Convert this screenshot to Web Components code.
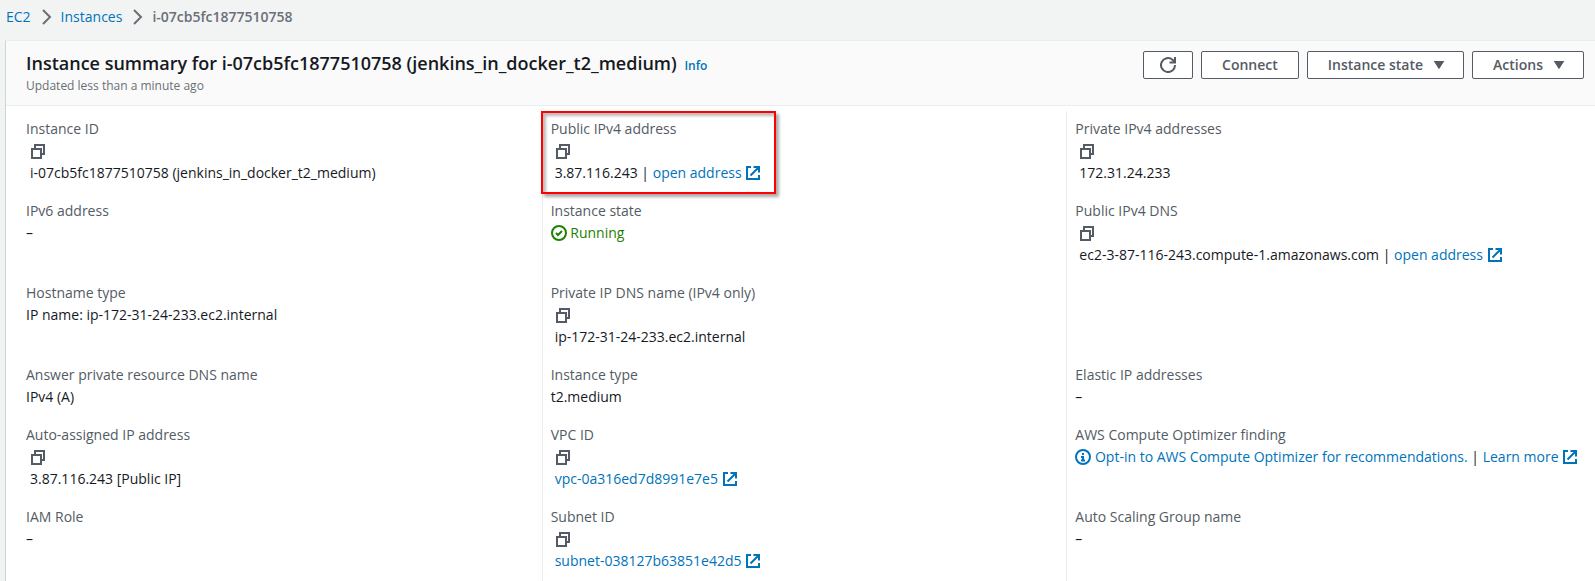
<!DOCTYPE html>
<html lang="en">
<head>
<meta charset="utf-8">
<title>Instance summary</title>
<style>
  html, body { margin: 0; height: 100%; }
  body {
    --link: #0073bb; --ink: #16191f; --muted: #545b64; --line: #eaeded;
    background: #f2f3f3; color: var(--ink);
    font: 14px/22px "Open Sans", "Noto Sans", sans-serif;
  }
</style>
</head>
<body>
<ec2-page>
  <ec2-breadcrumbs slot="top">
    <ec2-crumb>EC2</ec2-crumb>
    <ec2-crumb>Instances</ec2-crumb>
    <ec2-crumb current>i-07cb5fc1877510758</ec2-crumb>
  </ec2-breadcrumbs>
  <ec2-panel>
    <span slot="title">Instance summary for i-07cb5fc1877510758 (jenkins_in_docker_t2_medium)</span>
    <span slot="subtitle">Updated less than a minute ago</span>
    <ec2-button slot="actions" label="Refresh"><ec2-icon name="refresh"></ec2-icon></ec2-button>
    <ec2-button slot="actions">Connect</ec2-button>
    <ec2-button slot="actions" menu>Instance state</ec2-button>
    <ec2-button slot="actions" menu>Actions</ec2-button>

    <ec2-field label="Instance ID" copy>i-07cb5fc1877510758 (jenkins_in_docker_t2_medium)</ec2-field>
    <ec2-field label="Public IPv4 address" copy marked>3.87.116.243 | <ec2-link external>open address</ec2-link></ec2-field>
    <ec2-field label="Private IPv4 addresses" copy>172.31.24.233</ec2-field>

    <ec2-field label="IPv6 address">–</ec2-field>
    <ec2-field label="Instance state"><ec2-status>Running</ec2-status></ec2-field>
    <ec2-field label="Public IPv4 DNS" copy>ec2-3-87-116-243.compute-1.amazonaws.com | <ec2-link external>open address</ec2-link></ec2-field>

    <ec2-field label="Hostname type">IP name: ip-172-31-24-233.ec2.internal</ec2-field>
    <ec2-field label="Private IP DNS name (IPv4 only)" copy>ip-172-31-24-233.ec2.internal</ec2-field>
    <ec2-field></ec2-field>

    <ec2-field label="Answer private resource DNS name">IPv4 (A)</ec2-field>
    <ec2-field label="Instance type">t2.medium</ec2-field>
    <ec2-field label="Elastic IP addresses">–</ec2-field>

    <ec2-field label="Auto-assigned IP address" copy>3.87.116.243 [Public IP]</ec2-field>
    <ec2-field label="VPC ID" copy><ec2-link external>vpc-0a316ed7d8991e7e5</ec2-link></ec2-field>
    <ec2-field label="AWS Compute Optimizer finding"><ec2-link info>Opt-in to AWS Compute Optimizer for recommendations.</ec2-link> | <ec2-link external>Learn more</ec2-link></ec2-field>

    <ec2-field label="IAM Role">–</ec2-field>
    <ec2-field label="Subnet ID" copy><ec2-link external>subnet-038127b63851e42d5</ec2-link></ec2-field>
    <ec2-field label="Auto Scaling Group name">–</ec2-field>
  </ec2-panel>
</ec2-page>
<script>
const ICONS = {
  copy: '<path d="M2 6h9v9H2zM5 6V2h9v9h-3"/>',
  external: '<path d="M6 2H2v12h12v-4M8.5 2H14v5.5M14 2 5.5 10.5"/>',
  refresh: '<path d="M15 8A7 7 0 1 1 12.5 2.7L14.5 5M15 0v5.500h-5.500"/>',
  check: '<circle cx="8" cy="8" r="7"/><path d="m5 8 2 2 4-4"/>',
  info: '<circle cx="8" cy="8" r="7"/><path d="M8 4v2M6 8h2v4M6 11.5h4"/>',
  chevron: '<path d="m5 1 7 7-7 7"/>',
  caret: '<path d="M4.5 5h7L8 10.5z" fill="currentColor"/>'
};
const define = (name, render) => customElements.define(name, class extends HTMLElement {
  constructor() { super(); this.attachShadow({ mode: 'open' }); }
  connectedCallback() { this.shadowRoot.innerHTML = render(this); }
});

define('ec2-icon', el => `
  <style>
    :host { display: inline-block; width: 16px; height: 16px; vertical-align: middle; }
    svg { display: block; width: 100%; height: 100%; fill: none; stroke: currentColor; stroke-width: 2; }
  </style>
  <svg viewBox="0 0 16 16" aria-hidden="true">${ICONS[el.getAttribute('name')]}</svg>`);

define('ec2-page', () => `
  <style>
    :host { display: flex; flex-direction: column; min-height: 100vh; }
    main { flex: 1; display: flex; padding-left: 5px; }
    ::slotted(ec2-panel) { flex: 1; }
  </style>
  <slot name="top"></slot><main><slot></slot></main>`);

define('ec2-breadcrumbs', () => `
  <style>
    :host { display: block; padding: 6px 6px 12px; }
    nav { display: flex; }
  </style>
  <nav aria-label="Breadcrumbs"><slot></slot></nav>`);

define('ec2-crumb', el => el.hasAttribute('current') ? `
  <style>:host { color: #687078; font-weight: 600; }</style>
  <span aria-current="page"><slot></slot></span>` : `
  <style>
    :host { display: flex; align-items: center; }
    a { color: var(--link); text-decoration: none; }
    ec2-icon { color: #687078; margin: 0 7px; }
  </style>
  <a href="#"><slot></slot></a><ec2-icon name="chevron"></ec2-icon>`);

define('ec2-panel', () => `
  <style>
    :host { display: flex; flex-direction: column; background: #fff; border-left: 1px solid #d0d4d4; border-top: 1px solid var(--line); }
    header { display: flex; justify-content: space-between; background: #fafafa; border-bottom: 1px solid var(--line); padding: 10px 11px 11px 20px; }
    h1 { display: inline; margin: 0; font-size: 18px; line-height: 25px; font-weight: 600; }
    p { margin: 0; font-size: 12px; line-height: 17px; color: #687078; }
    .info { margin-left: 4px; font-size: 12px; font-weight: 600; color: var(--link); text-decoration: none; }
    .actions { display: flex; gap: 8px; align-items: flex-start; }
    section { flex: 1; display: grid; grid-template-columns: repeat(3, 1fr); grid-template-rows: repeat(5, auto) 1fr; padding: 5px 4px 0 11px; }
    ::slotted(ec2-field:nth-of-type(3n+1)) { border-left-color: transparent; }
    ::slotted(ec2-field:nth-of-type(-n+3)) { padding-top: 7px; }
    ::slotted(ec2-field:nth-of-type(n+16)) { padding-bottom: 8px; }
  </style>
  <header>
    <div>
      <h1><slot name="title"></slot></h1> <a class="info" href="#">Info</a>
      <p><slot name="subtitle"></slot></p>
    </div>
    <div class="actions"><slot name="actions"></slot></div>
  </header>
  <section><slot></slot></section>`);

define('ec2-button', el => `
  <style>
    :host { display: block; }
    button { display: flex; align-items: center; gap: 8px; box-sizing: border-box; height: 28px; padding: 0 ${el.hasAttribute('label') || el.hasAttribute('menu') ? 16 : 20}px 0 ${el.hasAttribute('label') ? 16 : 20}px; border: 1px solid var(--muted); border-radius: 2px; background: #fff; color: var(--muted); font: inherit; font-weight: 600; white-space: nowrap; }
  </style>
  <button type="button" ${el.hasAttribute('label') ? `aria-label="${el.getAttribute('label')}"` : ''} ${el.hasAttribute('menu') ? 'aria-haspopup="true"' : ''}><slot></slot>${el.hasAttribute('menu') ? '<ec2-icon name="caret"></ec2-icon>' : ''}</button>`);

define('ec2-link', el => `
  <style>
    a { color: var(--link); text-decoration: none; white-space: nowrap; }
    ec2-icon { margin-bottom: 3px; }
  </style>
  <a href="#">${el.hasAttribute('info') ? '<ec2-icon name="info"></ec2-icon> ' : ''}<slot></slot>${el.hasAttribute('external') ? ' <ec2-icon name="external"></ec2-icon>' : ''}</a>`);

define('ec2-status', () => `
  <style>
    :host { color: #1d8102; }
    ec2-icon { margin-bottom: 3px; }
  </style>
  <ec2-icon name="check"></ec2-icon> <slot></slot>`);

define('ec2-field', el => {
  const label = el.getAttribute('label');
  const copy = el.hasAttribute('copy');
  return `
  <style>
    :host { display: block; position: relative; border-left: 1px solid var(--line); padding: 0 0 16px 8px; }
    .label { color: var(--muted); }
    .copied { padding-left: 4px; }
    button { display: flex; align-items: center; height: 22px; margin: 0; padding: 0 4px; border: 0; background: none; color: var(--muted); }
    .mark { position: absolute; left: -2px; top: 0; width: 231px; height: 79px; border: 2px solid #f00; box-shadow: 3px 3px 3px #0005, inset 3px 3px 3px #0004; pointer-events: none; }
  </style>
  ${label ? `<div class="label" id="l">${label}</div>` : ''}
  ${copy ? `<button type="button" aria-label="Copy ${label}"><ec2-icon name="copy"></ec2-icon></button>` : ''}
  <div ${label ? 'role="group" aria-labelledby="l"' : ''} class="${copy ? 'copied' : ''}"><slot></slot></div>
  ${el.hasAttribute('marked') ? '<div class="mark"></div>' : ''}`;
});
</script>
</body>
</html>
